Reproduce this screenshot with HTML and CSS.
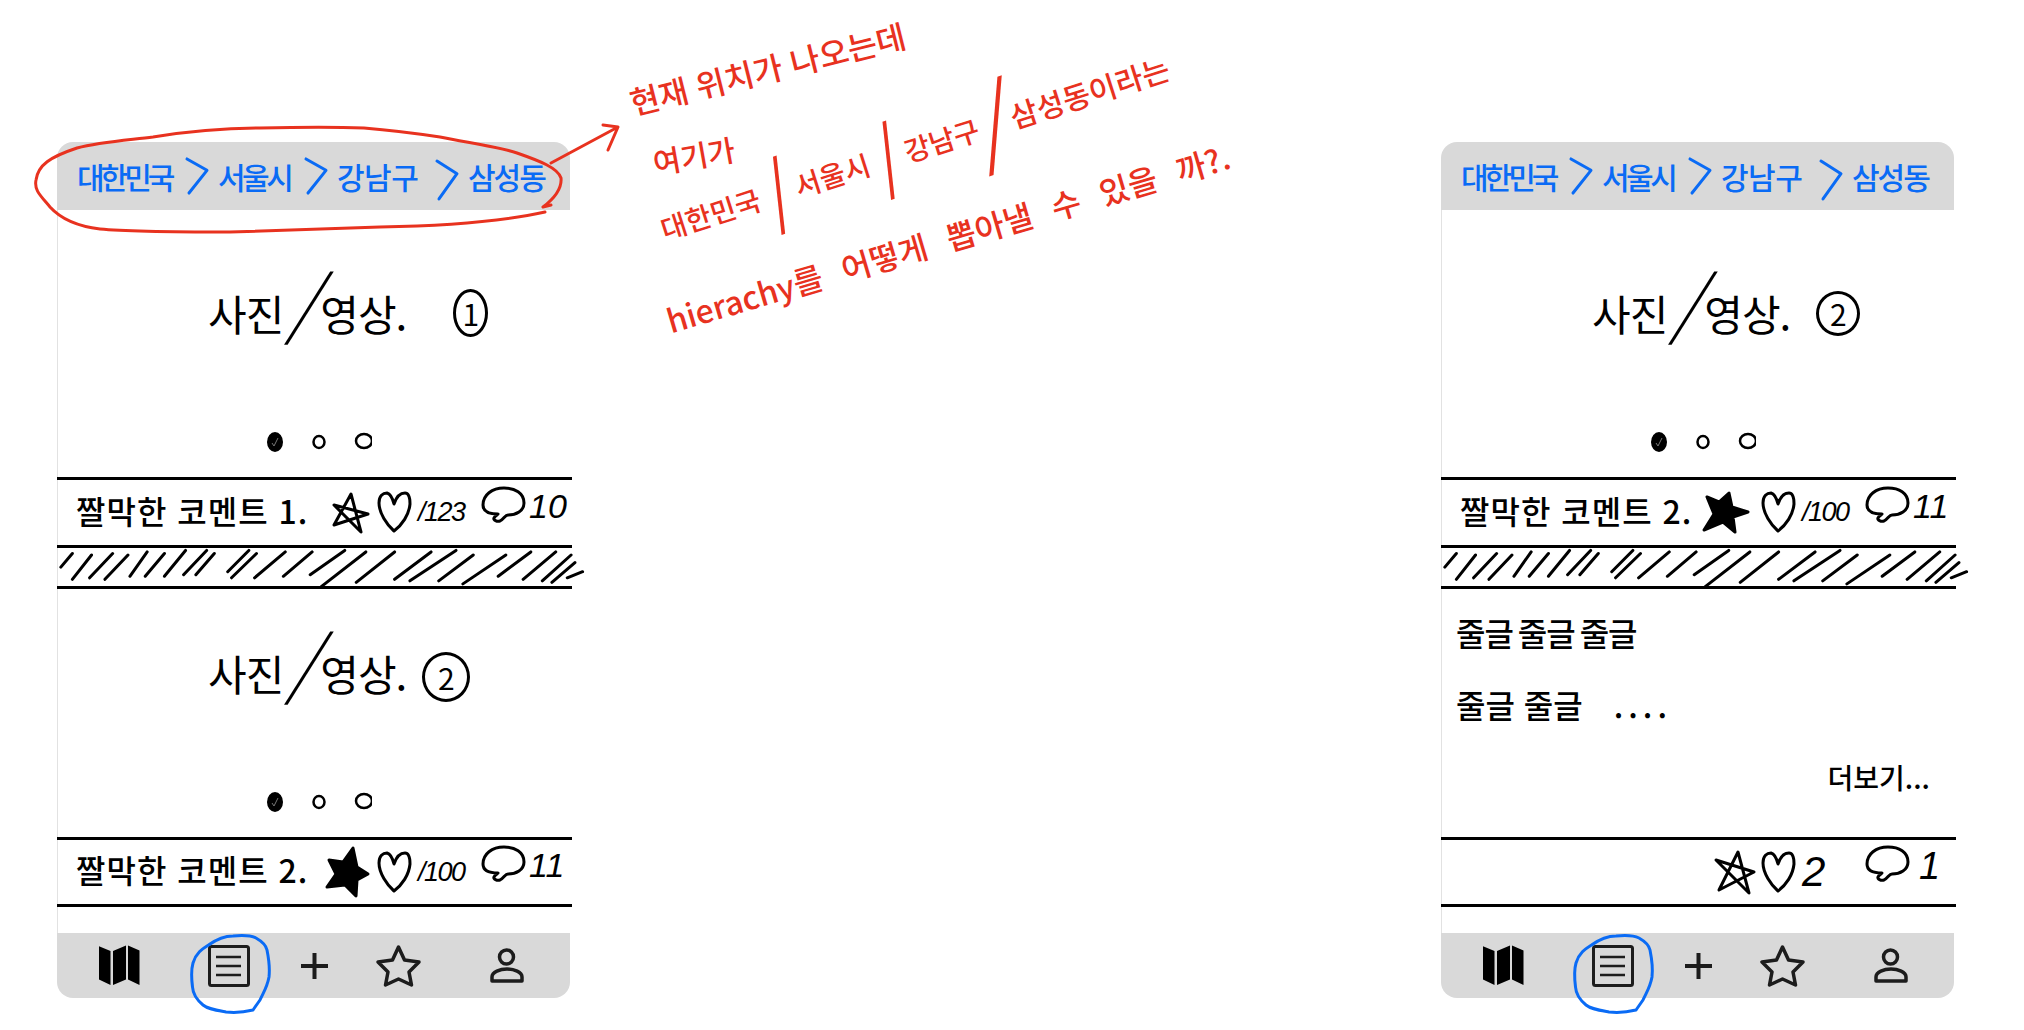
FILE: index.html
```html
<!DOCTYPE html>
<html lang="ko">
<head>
<meta charset="utf-8">
<title>Wireframe sketch</title>
<link rel="stylesheet" href="styles.css">
</head>
<body>
<svg class="defs" width="0" height="0" aria-hidden="true">
  <symbol id="chev" viewBox="0 0 22 38" preserveAspectRatio="none"><path class="blue-ink" d="M1 1 L21 13 L3 37"/></symbol>
  <symbol id="dots" viewBox="0 0 106 22">
    <ellipse cx="9" cy="11" rx="8" ry="10" fill="#000"/>
    <path d="M6 12 L8 15 L12 7" fill="none" stroke="#777" stroke-width="1"/>
    <ellipse class="ink thin" cx="53" cy="11" rx="5.5" ry="6"/>
    <ellipse class="ink thin" cx="98" cy="10" rx="8" ry="7"/>
  </symbol>
  <symbol id="star-line" viewBox="0 0 36 42"><path class="ink" d="M1 33 L18 2 L28 40 L1 13 L35 22 Z"/></symbol>
  <symbol id="star-line-2" viewBox="0 0 40 45"><path class="ink" d="M4 40 L23 2 L34 43 L1 10 L39 22 Z"/></symbol>
  <symbol id="star-solid" viewBox="0 0 43 50"><path class="ink solid" d="M27 1 L31 20 L42 27 L31 33 L30 49 L19 38 L1 40 L10 27 L3 13 L17 15 Z"/></symbol>
  <symbol id="star-solid-2" viewBox="0 0 46 41"><path class="ink solid" d="M4 5 L16 10 L26 1 L29 15 L45 20 L30 25 L32 40 L20 30 L1 38 L11 22 Z"/></symbol>
  <symbol id="heart" viewBox="0 0 33 41"><path class="ink" d="M16 39 C9 33 1 21 1 11 C1 4 5 1 9 1 C13 2 15 8 16 12 C18 6 22 1 27 1 C31 1 32 6 32 12 C31 23 24 33 16 39 Z"/></symbol>
  <symbol id="bubble" viewBox="0 0 43 36"><path class="ink" d="M16 27 C8 27 1 25 1 18 C1 8 10 1 22 1 C33 1 42 6 42 16 C42 24 34 28 26 28 C23 28 22 32 18 34 C15 35 11 33 12 31 C13 29 15 28 16 27 Z"/></symbol>
  <symbol id="hatch" viewBox="150 1277 1345 125" preserveAspectRatio="none"><path class="ink scaled" d="M160 1340L190 1295M190 1380L240 1300M235 1375L295 1295M275 1380L335 1300M340 1370L385 1290M380 1370L430 1295M430 1370L485 1285M480 1365L540 1285M512 1365L560 1295M595 1355L650 1285M605 1375L670 1295M665 1375L745 1290M740 1370L815 1290M810 1365L900 1285M838 1405L955 1290M930 1390L1030 1290M1030 1380L1125 1290M1070 1385L1190 1285M1145 1385L1235 1300M1208 1395L1320 1300M1300 1370L1385 1290M1365 1380L1450 1290M1415 1385L1490 1300M1440 1390L1500 1325M1480 1375L1520 1355"/></symbol>
  <symbol id="i-map" viewBox="0 0 41 41"><path fill="#000" d="M0 1.2 L11.5 6 V40 L0 34.5 Z M14 6 L27 .5 V34.5 L14 40 Z M29 .5 L40.5 5.5 V40 L29 34.5 Z"/></symbol>
  <symbol id="i-doc" viewBox="0 0 42 42"><rect class="nav-ink" x="1.5" y="1.5" width="39" height="39" rx="2"/><path class="nav-ink fine" d="M8 12 H33 M8 21 H33 M8 30 H33"/></symbol>
  <symbol id="i-plus" viewBox="0 0 27 26"><path class="nav-ink bold" d="M0 13 H27 M13.5 0 V26"/></symbol>
  <symbol id="i-star" viewBox="0 0 45 42"><path class="nav-ink bold-2" d="M22.5 2 L28.5 15 L43 17 L33 27 L35.5 40 L22.5 34 L9.5 40 L12 27 L2 17 L16.5 15 Z"/></symbol>
  <symbol id="i-user" viewBox="0 0 34 35"><circle class="nav-ink bold-2" cx="16.5" cy="9" r="7"/><path class="nav-ink bold-2" d="M2 33 V29 C2 24 10 21 17 21 C24 21 32 24 32 29 V33 Z"/></symbol>
</svg>

<main class="page">
  <section class="card">
    <header class="crumbs">
      <span class="crumb c1">대한민국</span><svg class="chev"><use href="#chev"/></svg>
      <span class="crumb c2">서울시</span><svg class="chev"><use href="#chev"/></svg>
      <span class="crumb c3">강남구</span><svg class="chev tall"><use href="#chev"/></svg>
      <span class="crumb c4">삼성동</span>
    </header>
    <div class="body">
      <div class="media first">
        <div class="caption"><span>사진</span><span class="slash">/</span><span>영상.</span><span class="num one">1</span></div>
        <svg class="dots"><use href="#dots"/></svg>
      </div>
      <div class="stats">
        <span class="note">짤막한 코멘트 1.</span>
        <svg class="star"><use href="#star-line"/></svg>
        <svg class="heart"><use href="#heart"/></svg>
        <span class="count">/123</span>
        <svg class="bubble"><use href="#bubble"/></svg>
        <span class="tally">10</span>
      </div>
      <div class="hatch"><svg><use href="#hatch"/></svg></div>
      <div class="media">
        <div class="caption"><span>사진</span><span class="slash">/</span><span>영상.</span><span class="num two">2</span></div>
        <svg class="dots"><use href="#dots"/></svg>
      </div>
      <div class="stats closed">
        <span class="note">짤막한 코멘트 2.</span>
        <svg class="star big"><use href="#star-solid"/></svg>
        <svg class="heart"><use href="#heart"/></svg>
        <span class="count">/100</span>
        <svg class="bubble"><use href="#bubble"/></svg>
        <span class="tally">11</span>
      </div>
    </div>
    <nav class="tabs">
      <svg class="tab map"><use href="#i-map"/></svg>
      <svg class="tab doc"><use href="#i-doc"/></svg>
      <svg class="tab plus"><use href="#i-plus"/></svg>
      <svg class="tab fav"><use href="#i-star"/></svg>
      <svg class="tab user"><use href="#i-user"/></svg>
    </nav>
  </section>

  <section class="card">
    <header class="crumbs">
      <span class="crumb c1">대한민국</span><svg class="chev"><use href="#chev"/></svg>
      <span class="crumb c2">서울시</span><svg class="chev"><use href="#chev"/></svg>
      <span class="crumb c3">강남구</span><svg class="chev tall"><use href="#chev"/></svg>
      <span class="crumb c4">삼성동</span>
    </header>
    <div class="body">
      <div class="media first">
        <div class="caption"><span>사진</span><span class="slash">/</span><span>영상.</span><span class="num three">2</span></div>
        <svg class="dots"><use href="#dots"/></svg>
      </div>
      <div class="stats">
        <span class="note">짤막한 코멘트 2.</span>
        <svg class="star big-2"><use href="#star-solid-2"/></svg>
        <svg class="heart"><use href="#heart"/></svg>
        <span class="count">/100</span>
        <svg class="bubble"><use href="#bubble"/></svg>
        <span class="tally">11</span>
      </div>
      <div class="hatch"><svg><use href="#hatch"/></svg></div>
      <article class="article">
        <p class="line-a">줄글 줄글 줄글</p>
        <p class="line-b">줄글 줄글 <span class="trail">....</span></p>
        <p class="more">더보기...</p>
      </article>
      <div class="stats closed">
        <span class="note"></span>
        <svg class="star wide"><use href="#star-line-2"/></svg>
        <svg class="heart"><use href="#heart"/></svg>
        <span class="count large">2</span>
        <svg class="bubble"><use href="#bubble"/></svg>
        <span class="tally large">1</span>
      </div>
    </div>
    <nav class="tabs">
      <svg class="tab map"><use href="#i-map"/></svg>
      <svg class="tab doc"><use href="#i-doc"/></svg>
      <svg class="tab plus"><use href="#i-plus"/></svg>
      <svg class="tab fav"><use href="#i-star"/></svg>
      <svg class="tab user"><use href="#i-user"/></svg>
    </nav>
  </section>
</main>

<svg class="overlay" viewBox="0 0 2024 1030" aria-hidden="true">
  <path class="red-ink" d="M545 212 C500 222 440 226 380 227 C320 229 270 231 230 232 C180 232 130 232 100 229 C75 226 60 218 50 207 C40 195 34 190 36 180 C38 165 50 157 77 148 C100 142 130 140 153 137 C190 131 220 128 260 128 C300 127 340 127 364 128 C400 131 420 134 440 137 C470 143 500 147 517 153 C540 161 558 168 561 178 C562 188 556 197 543 207 L551 205"/>
  <path class="red-ink" d="M551 163 L618 127 M603 125 L618 127 L608 150"/>
  <g id="ring"><path class="ring-ink" d="M253 1010 C245 1012 235 1013 226 1012 C215 1010 208 1009 203 1005 C197 1000 193 995 192.5 987 C191 975 191 970 193 963 C196 953 202 949 208.5 945 C217 939 225 936 233 936 C243 935 250 935 256 938 C263 942 266 945 267 950 C269 960 270 968 269 977 C267 988 263 993 260 1000 L253 1010"/></g>
  <use href="#ring" x="1383"/>
</svg>

<div class="memo m1">현재 위치가 나오는데</div>
<div class="memo m2">여기가</div>
<div class="memo m3">대한민국<span class="cut">/</span>서울시<span class="cut">/</span>강남구<span class="cut long">/</span><span class="tail">삼성동이라는</span></div>
<div class="memo m4">hierachy를 어떻게 뽑아낼 수 있을 까?.</div>
</body>
</html>
```
FILE: styles.css
```css
* { box-sizing: border-box; }

html, body { margin: 0; height: 100%; background: #fff; overflow: hidden; }

body { position: relative; font-family: "Noto Sans CJK KR", "Noto Sans", sans-serif; color: #000; }

.defs { position: absolute; }

symbol { overflow: visible; }

.page {
  display: flex;
  justify-content: space-between;
  height: 1030px;
  padding: 142px 70px 32px 57px;
}

.card { display: flex; flex-direction: column; width: 513px; height: 856px; }

/* breadcrumb */
.crumbs {
  display: flex;
  align-items: center;
  flex: none;
  height: 68px;
  padding-left: 20px;
  background: #d9d9d9;
  border-radius: 16px 16px 0 0;
  color: #0a6bf5;
}
.crumb { font-size: 30px; font-weight: 500; line-height: 1; letter-spacing: -4px; white-space: nowrap; }
.c1 { width: 94px; }
.c2 { width: 72px; letter-spacing: -3.5px; }
.c3 { width: 82px; letter-spacing: -.5px; }
.c4 { width: 76px; letter-spacing: -2px; }
.chev { width: 22px; height: 36px; margin: 0 10px 0 15px; flex: none; overflow: visible; }
.chev.tall { height: 40px; margin: 8px 10px 0 17px; }

/* body */
.body { flex: 1; display: flex; flex-direction: column; border-left: 1px solid #e2e2e2; }

.media {
  flex: none;
  height: 248px;
  display: flex;
  flex-direction: column;
  justify-content: flex-end;
  padding: 0 0 24px 150px;
}
.media.first { height: 267px; }

.caption {
  display: flex;
  align-items: center;
  height: 76px;
  font-size: 42px;
  line-height: 1;
  letter-spacing: -1px;
  white-space: nowrap;
}
.slash {
  display: inline-block;
  font-size: 76px;
  font-weight: 300;
  line-height: 1;
  margin: -18px 4px 0;
  transform: translateX(8px) skewX(-16deg);
}
.num {
  display: flex;
  align-items: center;
  justify-content: center;
  border: 3px solid #000;
  border-radius: 50%;
  font-size: 30px;
  line-height: 1;
  letter-spacing: 0;
}
.num.one { width: 35px; height: 48px; margin-left: 47px; }
.num.two { width: 48px; height: 50px; margin: 8px 0 0 16px; }
.num.three { width: 44px; height: 45px; margin-left: 26px; }

.dots { display: block; width: 106px; height: 22px; margin: 80px 0 0 58px; flex: none; }

/* stats row */
.stats {
  flex: none;
  display: grid;
  grid-template-columns: 251px 47px 40px 66px 45px 1fr;
  align-items: center;
  height: 68px;
  margin: 0 -2px 0 -1px;
  padding-left: 19px;
  border-top: 3px solid #000;
}
.stats.closed { height: 70px; border-bottom: 3px solid #000; }

.note { font-size: 32px; font-weight: 500; line-height: 1; white-space: nowrap; letter-spacing: 1px; margin-bottom: 6px; }

.star { width: 36px; height: 42px; justify-self: center; overflow: visible; }
.star.big { width: 43px; height: 50px; margin-left: -6px; }
.star.big-2 { width: 46px; height: 41px; margin-left: -18px; }
.star.wide { width: 40px; height: 45px; }
.heart { width: 33px; height: 41px; justify-self: center; overflow: visible; }
.bubble { width: 43px; height: 36px; justify-self: end; margin-bottom: 16px; overflow: visible; }

.count, .tally { font-family: "Liberation Sans", sans-serif; font-style: italic; line-height: 1; white-space: nowrap; }
.count { font-size: 27px; margin-left: 4px; letter-spacing: -1.5px; }
.tally { font-size: 34px; margin: 0 0 14px 4px; }
.count.large { font-size: 42px; }
.tally.large { font-size: 38px; margin: 0 0 12px 10px; }

/* hatch */
.hatch {
  flex: none;
  height: 44px;
  margin: 0 -2px 0 -1px;
  border-top: 3px solid #000;
  border-bottom: 3px solid #000;
}
.hatch svg { display: block; width: 516px; height: 38px; overflow: visible; }

/* article */
.article {
  flex: none;
  height: 248px;
  display: flex;
  flex-direction: column;
  padding: 20px 24px 0 14px;
}
.article p { margin: 0; font-weight: 500; white-space: nowrap; }
.line-a, .line-b { font-size: 32px; line-height: 46px; }
.line-a { word-spacing: -3px; letter-spacing: -1px; margin-bottom: 26px !important; }
.trail { margin-left: 22px; letter-spacing: 5px; }
.more { align-self: flex-end; font-size: 28px; line-height: 36px; margin-top: 32px !important; }

/* tabs */
.tabs {
  flex: none;
  display: flex;
  align-items: center;
  height: 65px;
  margin-top: auto;
  padding-left: 42px;
  background: #d9d9d9;
  border-radius: 0 0 16px 16px;
}
.tab { flex: none; display: block; overflow: visible; }
.map { width: 41px; height: 41px; }
.doc { width: 42px; height: 42px; margin-left: 68px; }
.plus { width: 27px; height: 26px; margin-left: 51px; }
.fav { width: 45px; height: 42px; margin-left: 48px; }
.user { width: 34px; height: 35px; margin-left: 69px; }

/* strokes */
.ink { fill: none; stroke: #000; stroke-width: 3; stroke-linecap: round; stroke-linejoin: round; }
.ink.thin { stroke-width: 2.5; }
.ink.solid { fill: #000; }
.ink.scaled { vector-effect: non-scaling-stroke; }
.blue-ink { fill: none; stroke: #0a6bf5; stroke-width: 3; stroke-linecap: round; stroke-linejoin: round; vector-effect: non-scaling-stroke; }
.nav-ink { fill: none; stroke: #1c1c1c; stroke-width: 3; stroke-linejoin: round; }
.nav-ink.fine { stroke-width: 2.5; }
.nav-ink.bold { stroke-width: 4; }
.nav-ink.bold-2 { stroke-width: 3.5; }
.red-ink { fill: none; stroke: #e8321f; stroke-width: 3; stroke-linecap: round; stroke-linejoin: round; }
.ring-ink { fill: none; stroke: #0a6bf5; stroke-width: 3; stroke-linecap: round; stroke-linejoin: round; }

/* overlay annotations */
.overlay { position: absolute; left: 0; top: 0; width: 2024px; height: 1030px; pointer-events: none; }

.memo {
  position: absolute;
  color: #e8321f;
  font-size: 32px;
  font-weight: 500;
  line-height: 40px;
  white-space: nowrap;
  transform-origin: left center;
}
.m1 { left: 630px; top: 82px; transform: rotate(-14deg); }
.m2 { left: 653px; top: 142px; font-size: 30px; transform: rotate(-10deg); }
.m3 { left: 661px; top: 208px; font-size: 28px; transform: rotate(-17.7deg); }
.m4 { left: 667px; top: 300px; transform: rotate(-16.4deg); word-spacing: 12px; }
.cut { display: inline-block; font-size: 80px; font-weight: 300; line-height: 40px; margin: 0 3px; vertical-align: top; transform: skewX(8deg); }
.cut.long { font-size: 96px; margin: 0 -2px; transform: skewX(-4deg); }
.tail { font-size: 30px; }
```
